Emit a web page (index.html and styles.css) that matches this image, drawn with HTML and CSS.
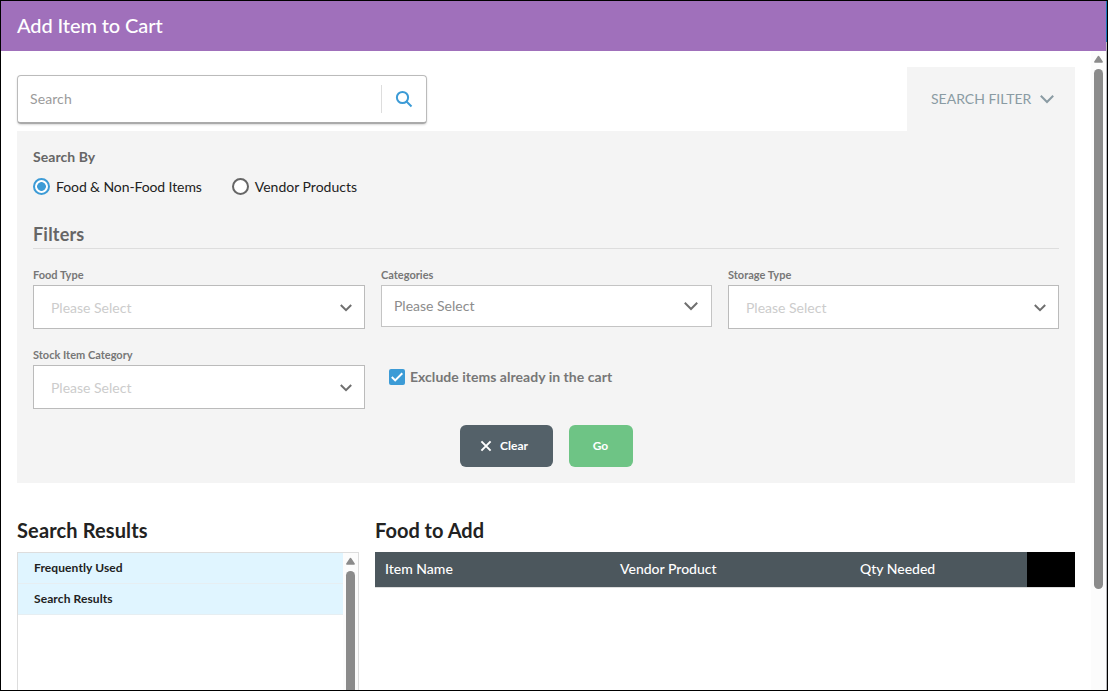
FILE: index.html
```
<!DOCTYPE html>
<html lang="en">
<head>
    <meta charset="UTF-8">
    <meta name="viewport" content="width=device-width, initial-scale=1.0">
    <title>Add Item to Cart</title>
    <link rel="stylesheet" href="styles.css">
</head>
<body>
    <div class="dialog">
        <div class="dialog-main">
            <header>
                <h1>Add Item to Cart</h1>
            </header>

            <div class="dialog-body">
                <main>
                    <div class="toolbar">
                        <div class="search-box">
                            <span class="search-text">Search</span>
                            <button class="search-button" aria-label="Search">
                                <svg width="18" height="18" viewBox="0 0 18 18"><circle cx="7.5" cy="7.5" r="5.6"/><path d="M11.5 11.5L16.5 16.5"/></svg>
                            </button>
                        </div>
                        <div class="filter-tab">
                            <span>SEARCH FILTER</span>
                            <svg class="chevron" width="16" height="10" viewBox="0 0 16 10"><path d="M1.8 1.8L8 8L14.2 1.8"/></svg>
                        </div>
                    </div>

                    <section class="filter-panel">
                        <div class="search-by">Search By</div>
                        <div class="radios">
                            <label class="radio"><span class="dot checked"></span><span class="radio-text">Food &amp; Non-Food Items</span></label>
                            <label class="radio"><span class="dot"></span><span>Vendor Products</span></label>
                        </div>

                        <h3>Filters</h3>
                        <div class="filters">
                            <div class="field">
                                <label>Food Type</label>
                                <div class="select"><span>Please Select</span><svg class="chevron" width="14" height="10" viewBox="0 0 14 10"><path d="M1.8 2L7 7.2L12.2 2"/></svg></div>
                            </div>
                            <div class="field">
                                <label>Categories</label>
                                <div class="select multi"><span>Please Select</span><svg class="chevron" width="16" height="10" viewBox="0 0 16 10"><path d="M1.8 1.8L8 8L14.2 1.8"/></svg></div>
                            </div>
                            <div class="field">
                                <label>Storage Type</label>
                                <div class="select"><span>Please Select</span><svg class="chevron" width="14" height="10" viewBox="0 0 14 10"><path d="M1.8 2L7 7.2L12.2 2"/></svg></div>
                            </div>
                            <div class="field">
                                <label>Stock Item Category</label>
                                <div class="select"><span>Please Select</span><svg class="chevron" width="14" height="10" viewBox="0 0 14 10"><path d="M1.8 2L7 7.2L12.2 2"/></svg></div>
                            </div>
                            <div class="exclude">
                                <span class="checkbox"><svg width="14" height="14" viewBox="0 0 14 14"><path d="M1.8 7L5.2 10.4L12.3 3.3"/></svg></span>
                                <span class="exclude-text">Exclude items already in the cart</span>
                            </div>
                        </div>

                        <div class="buttons">
                            <button class="btn btn-clear"><svg width="12" height="12" viewBox="0 0 12 12"><path d="M1.4 1.4L10.6 10.6M10.6 1.4L1.4 10.6"/></svg><span>Clear</span></button>
                            <button class="btn btn-go"><span>Go</span></button>
                        </div>
                    </section>

                    <div class="columns">
                        <section class="results">
                            <h2>Search Results</h2>
                            <div class="result-box">
                                <ul>
                                    <li>Frequently Used</li>
                                    <li>Search Results</li>
                                </ul>
                                <div class="scrollbar">
                                    <svg width="11" height="8" viewBox="0 0 11 8"><path d="M5.5 1.5L9.2 7H1.8Z"/></svg>
                                    <div class="thumb"></div>
                                </div>
                            </div>
                        </section>
                        <section class="food">
                            <h2>Food to Add</h2>
                            <div class="table-head">
                                <span>Item Name</span>
                                <span>Vendor Product</span>
                                <span>Qty Needed</span>
                                <span class="action"></span>
                            </div>
                        </section>
                    </div>
                </main>

                <div class="scrollbar page-scrollbar">
                    <svg width="11" height="8" viewBox="0 0 11 8"><path d="M5.5 1.5L9.2 7H1.8Z"/></svg>
                    <div class="thumb"></div>
                </div>
            </div>
        </div>
        <div class="dialog-edge"></div>
    </div>
</body>
</html>
```
FILE: styles.css
```
* {
    margin: 0;
    padding: 0;
    box-sizing: border-box;
}

body {
    font-family: Lato, sans-serif;
    font-size: 14px;
    background: #fff;
    color: #222;
    overflow: hidden;
}

svg {
    fill: none;
    stroke-width: 2;
    flex: none;
}

button {
    font-family: inherit;
    border: none;
}

.dialog {
    display: flex;
    height: 691px;
    border: 1px solid #000;
}

.dialog-main {
    flex: 1;
    display: flex;
    flex-direction: column;
}

.dialog-edge {
    width: 1px;
    background: linear-gradient(#1979b8 41px, #b9b9bd 41px);
}

header {
    height: 50px;
    padding-left: 16px;
    background: #a070bb;
    color: #fff;
}

h1 {
    font-size: 20px;
    font-weight: 500;
    line-height: 48px;
    letter-spacing: -0.1px;
}

.dialog-body {
    flex: 1;
    min-height: 0;
    display: flex;
    justify-content: space-between;
}

main {
    width: 1074px;
    padding: 16px 0 0 16px;
    display: flex;
    flex-direction: column;
}

.toolbar {
    display: flex;
    justify-content: space-between;
    height: 64px;
    flex: none;
}

.search-box {
    display: flex;
    align-items: center;
    justify-content: space-between;
    width: 410px;
    height: 49px;
    margin-top: 8px;
    padding-left: 12px;
    border: 1px solid #bbb;
    border-bottom: 2px solid #aaa;
    border-radius: 4px;
    box-shadow: 0 1px 2px rgba(0, 0, 0, 0.15);
}

.search-text {
    padding-bottom: 2px;
    color: #9b9b9b;
    letter-spacing: 0.1px;
}

.search-button {
    display: flex;
    align-items: center;
    width: 45px;
    height: 28px;
    padding-left: 13px;
    background: none;
    border-left: 1px solid #ddd;
}

.search-button svg {
    stroke: #3c9bd6;
}

.filter-tab {
    display: flex;
    align-items: center;
    gap: 8px;
    width: 168px;
    padding-left: 24px;
    background: #f4f4f4;
    color: #8a9ba3;
}

.filter-tab span {
    padding-bottom: 2px;
}

.filter-tab .chevron {
    stroke: #8a9ba3;
}

.filter-panel {
    height: 352px;
    flex: none;
    padding: 16px;
    background: #f4f4f4;
    color: #666;
}

.search-by {
    font-weight: 700;
    line-height: 20px;
    letter-spacing: 0.05px;
}

.radios {
    display: flex;
    gap: 30px;
    margin-top: 10px;
    color: #222;
}

.radio {
    display: flex;
    align-items: center;
    gap: 6px;
    height: 20px;
    padding-bottom: 2px;
}

.radio-text {
    letter-spacing: -0.1px;
}

.dot {
    width: 17px;
    height: 17px;
    border: 2px solid #666;
    border-radius: 50%;
    background: #fff;
}

.dot.checked {
    border-color: #3c9bd6;
    background: radial-gradient(circle, #3c9bd6 4px, #fff 4.7px);
}

h3 {
    margin-top: 25px;
    height: 27px;
    line-height: 24px;
    font-size: 18px;
    font-weight: 700;
    letter-spacing: 0.2px;
    border-bottom: 1px solid #ddd;
}

.filters {
    display: grid;
    grid-template-columns: 332px 331px 331px;
    grid-auto-rows: 64px;
    gap: 16px;
    margin-top: 16px;
}

.field label {
    display: block;
    height: 20px;
    line-height: 20px;
    font-size: 11px;
    font-weight: 700;
    color: #777;
}

.select {
    display: flex;
    align-items: center;
    justify-content: space-between;
    height: 44px;
    padding: 1px 11px 0 17px;
    border: 1px solid #bbb;
    background: #fff;
    color: #ccc;
}

.select.multi {
    height: 42px;
    padding: 0 12px;
    border-color: #c4c4c4;
    color: #8c8c8c;
}

.select.multi span {
    padding-bottom: 2px;
}

.select .chevron {
    stroke: #6f6f6f;
}

.exclude {
    display: flex;
    align-items: center;
    gap: 5px;
    height: 20px;
    margin: 22px 0 0 8px;
    font-weight: 700;
    color: #777;
}

.exclude-text {
    padding-bottom: 2px;
    letter-spacing: 0.03px;
}

.checkbox {
    display: flex;
    align-items: center;
    justify-content: center;
    width: 16px;
    height: 16px;
    border-radius: 2px;
    background: #3c9bd6;
}

.checkbox svg {
    stroke: #fff;
}

.buttons {
    display: flex;
    justify-content: center;
    gap: 16px;
    margin-top: 16px;
}

.btn {
    display: flex;
    align-items: center;
    justify-content: center;
    gap: 8px;
    width: 64px;
    height: 42px;
    border-radius: 6px;
    font-size: 12px;
    font-weight: 700;
    color: #fff;
}

.btn span {
    padding-bottom: 1px;
}

.btn-clear {
    width: 93px;
    padding-right: 4px;
    background: #546169;
}

.btn-clear svg {
    stroke: #fff;
}

.btn-go {
    background: #6ec485;
}

.columns {
    flex: 1;
    min-height: 0;
    display: flex;
    gap: 16px;
    padding-top: 35px;
}

h2 {
    height: 34px;
    line-height: 25px;
    font-size: 20px;
    font-weight: 700;
}

.results {
    width: 342px;
    display: flex;
    flex-direction: column;
}

.results h2 {
    letter-spacing: 0.13px;
}

.result-box {
    flex: 1;
    display: flex;
    border: 1px solid #ddd;
    border-bottom: none;
}

ul {
    flex: 1;
    list-style: none;
}

li {
    height: 31px;
    padding-left: 16px;
    line-height: 30px;
    font-size: 12px;
    font-weight: 700;
    letter-spacing: 0.1px;
    border-bottom: 1px solid #e6eef2;
    background: #e0f5ff;
}

.scrollbar {
    width: 15px;
    display: flex;
    flex-direction: column;
    align-items: center;
    padding-top: 4px;
    background: #fcfcfc;
}

.scrollbar svg {
    fill: #8b8b8b;
    stroke: #8b8b8b;
    stroke-width: 1.4;
    stroke-linejoin: round;
}

.thumb {
    flex: 1;
    width: 9px;
    margin-top: 6px;
    border-radius: 5px 5px 0 0;
    background: #8b8b8b;
}

.page-scrollbar .thumb {
    flex: none;
    height: 520px;
    border-radius: 5px;
}

.food {
    flex: 1;
}

.table-head {
    display: grid;
    grid-template-columns: 235px 240px 177px 48px;
    height: 35px;
    line-height: 34px;
    font-weight: 500;
    background: #4c575d;
    color: #fff;
    box-shadow: 0 1px 0 #ddd;
}

.table-head span {
    padding-left: 10px;
}

.table-head .action {
    background: #000;
}
```
